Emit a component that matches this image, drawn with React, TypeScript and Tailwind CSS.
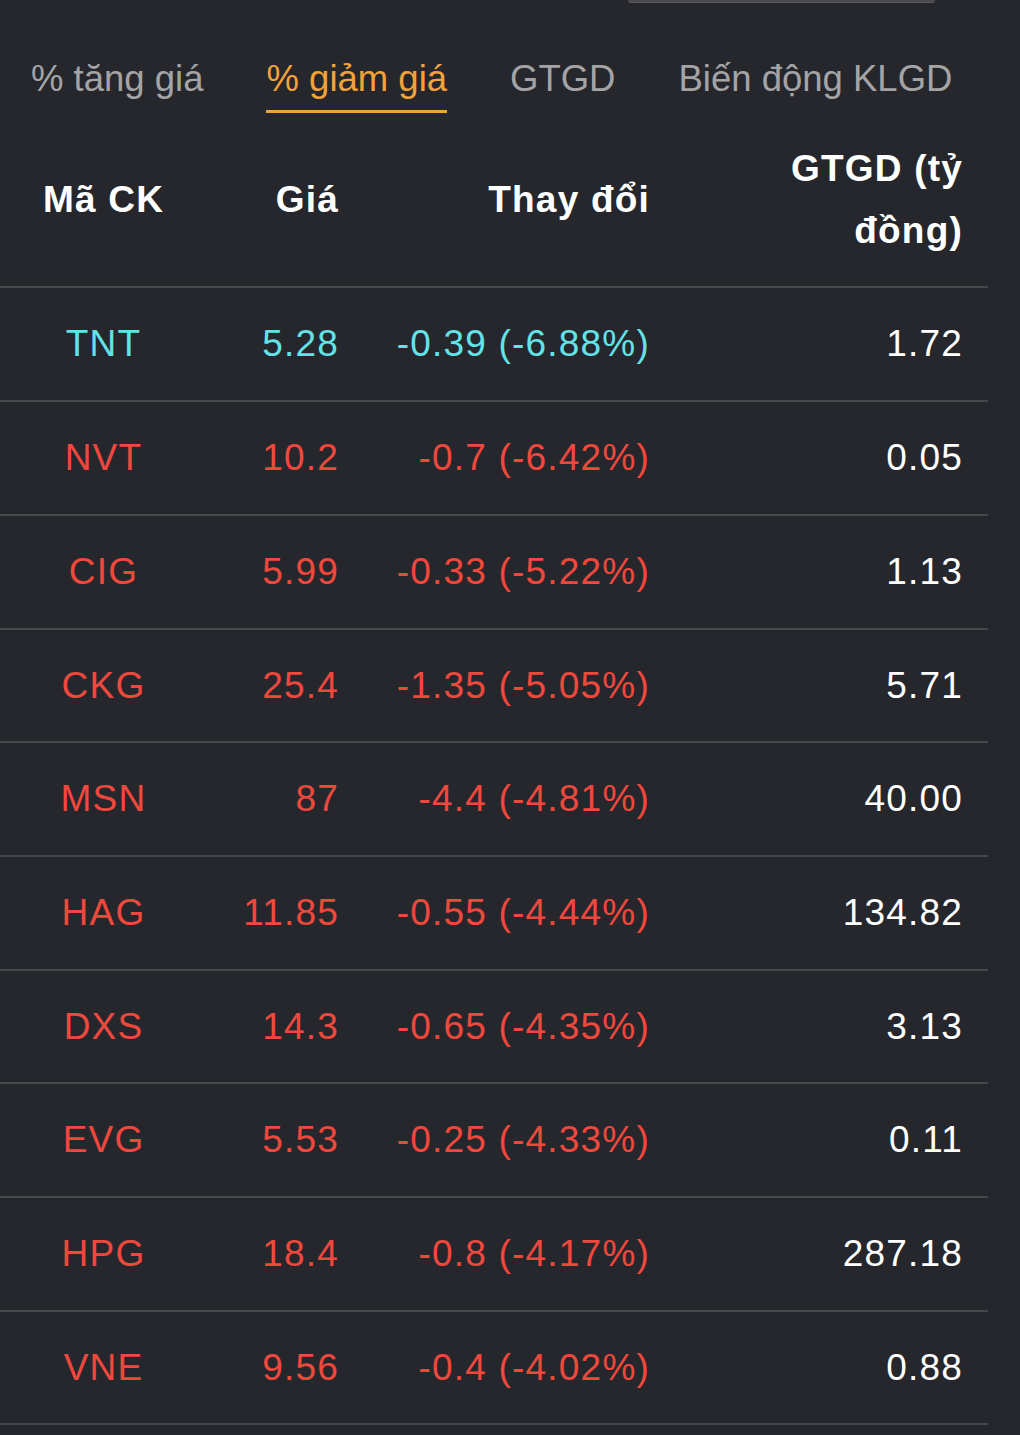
import React from "react";

type Row = { code: string; price: string; change: string; value: string; up?: boolean };

const rows: Row[] = [
  { code: "TNT", price: "5.28", change: "-0.39 (-6.88%)", value: "1.72", up: true },
  { code: "NVT", price: "10.2", change: "-0.7 (-6.42%)", value: "0.05" },
  { code: "CIG", price: "5.99", change: "-0.33 (-5.22%)", value: "1.13" },
  { code: "CKG", price: "25.4", change: "-1.35 (-5.05%)", value: "5.71" },
  { code: "MSN", price: "87", change: "-4.4 (-4.81%)", value: "40.00" },
  { code: "HAG", price: "11.85", change: "-0.55 (-4.44%)", value: "134.82" },
  { code: "DXS", price: "14.3", change: "-0.65 (-4.35%)", value: "3.13" },
  { code: "EVG", price: "5.53", change: "-0.25 (-4.33%)", value: "0.11" },
  { code: "HPG", price: "18.4", change: "-0.8 (-4.17%)", value: "287.18" },
  { code: "VNE", price: "9.56", change: "-0.4 (-4.02%)", value: "0.88" },
];

const tabs = ["% tăng giá", "% giảm giá", "GTGD", "Biến động KLGD"];

export default function App() {
  return (
    <div
      className="w-[1020px] min-h-[1435px] bg-[#26272c] overflow-hidden"
      style={{ fontFamily: '"Liberation Sans", Arial, sans-serif' }}
    >
      <div className="ml-[628px] w-[307px] h-[3px] bg-[#4b4b4d] border-b border-[#5d5d60] rounded-b-[6px]" />
      <div className="flex gap-[63px] pl-[31px] pt-[55px]">
        {tabs.map((t, i) => (
          <div
            key={t}
            className={
              i === 1
                ? "text-[36.5px] leading-[42px] pb-[10px] border-b-[3px] border-[#f2a23a] text-[#f2a23a] whitespace-nowrap"
                : "text-[36.5px] leading-[42px] pb-[10px] border-b-[3px] border-transparent text-[#a4a4a6] whitespace-nowrap"
            }
          >
            {t}
          </div>
        ))}
      </div>
      <div className="w-[988px] text-[37px] tracking-[1.2px]">
        <div className="grid grid-cols-[207px_157px_311px_313px] items-center border-b-2 border-[#47484c] font-bold text-white leading-[61.7px]">
          <div className="py-[25px] px-[10px] text-center">Mã CK</div>
          <div className="py-[25px] pr-[25px] text-right">Giá</div>
          <div className="py-[25px] pr-[25px] text-right">Thay đổi</div>
          <div className="py-[25px] pr-[25px] text-right">
            GTGD (tỷ
            <br />
            đồng)
          </div>
        </div>
        {rows.map((r) => {
          const c = r.up ? "text-[#62e3e8]" : "text-[#f0483d]";
          return (
            <div
              key={r.code}
              className="grid grid-cols-[207px_157px_311px_313px] items-center border-b-2 border-[#47484c] leading-[61.7px]"
            >
              <div className={"py-[25px] px-[10px] text-center " + c}>{r.code}</div>
              <div className={"py-[25px] pr-[25px] text-right " + c}>{r.price}</div>
              <div className={"py-[25px] pr-[25px] text-right " + c}>{r.change}</div>
              <div className="py-[25px] pr-[25px] text-right text-white">{r.value}</div>
            </div>
          );
        })}
      </div>
    </div>
  );
}
